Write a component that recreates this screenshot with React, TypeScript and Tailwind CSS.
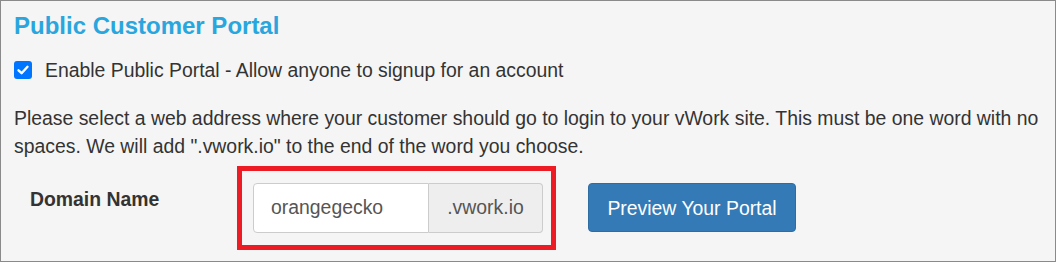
import React from "react";

export default function App() {
  return (
    <div className="w-[1056px] h-[262px] border border-[#8a8a8a] bg-[#f5f5f5] text-[#333333] font-['Liberation_Sans',Arial,sans-serif] overflow-hidden">
      <div className="pl-[13px] pt-[11px]">
        <h2 className="text-[24px] leading-[28px] font-bold text-[#29a6de]">Public Customer Portal</h2>
        <label className="mt-[16px] flex items-center h-[28px] text-[19.4px] leading-[28px]">
          <span className="w-[18px] h-[18px] rounded-[3px] bg-[#0075ff] flex items-center justify-center">
            <svg width="14" height="14" viewBox="0 0 14 14" fill="none">
              <path d="M2.5 7.3 L5.6 10.2 L11.5 3.8" stroke="white" strokeWidth="2.4" strokeLinecap="round" strokeLinejoin="round" />
            </svg>
          </span>
          <span className="ml-[13px]">Enable Public Portal - Allow anyone to signup for an account</span>
        </label>
        <p className="mt-[20px] pr-[13px] text-[19.4px] leading-[28px]">
          Please select a web address where your customer should go to login to your vWork site. This must be one word with no spaces. We will add ".vwork.io" to the end of the word you choose.
        </p>
        <div className="mt-[6px] flex items-start">
          <div className="w-[223px] pl-[16px] pt-[19px] text-[19.4px] leading-[28px] font-bold">Domain Name</div>
          <div className="border-[5px] border-[#ed1c24] pl-[11px] pr-[8px] pt-[12px] pb-[12px]">
            <div className="flex h-[50px] text-[19.4px]">
              <div className="w-[176px] h-full bg-white border border-[#cccccc] rounded-l-[4px] flex items-center pl-[17px] text-[#555555]">orangegecko</div>
              <div className="w-[114px] h-full bg-[#eeeeee] border border-l-0 border-[#cccccc] rounded-r-[4px] flex items-center justify-center text-[#555555]">.vwork.io</div>
            </div>
          </div>
          <button className="ml-[32px] mt-[17px] w-[208px] h-[49px] bg-[#337ab7] border border-[#2e6da4] rounded-[4px] text-white text-[19.4px] flex items-center justify-center pt-[2px]">
            Preview Your Portal
          </button>
        </div>
      </div>
    </div>
  );
}
